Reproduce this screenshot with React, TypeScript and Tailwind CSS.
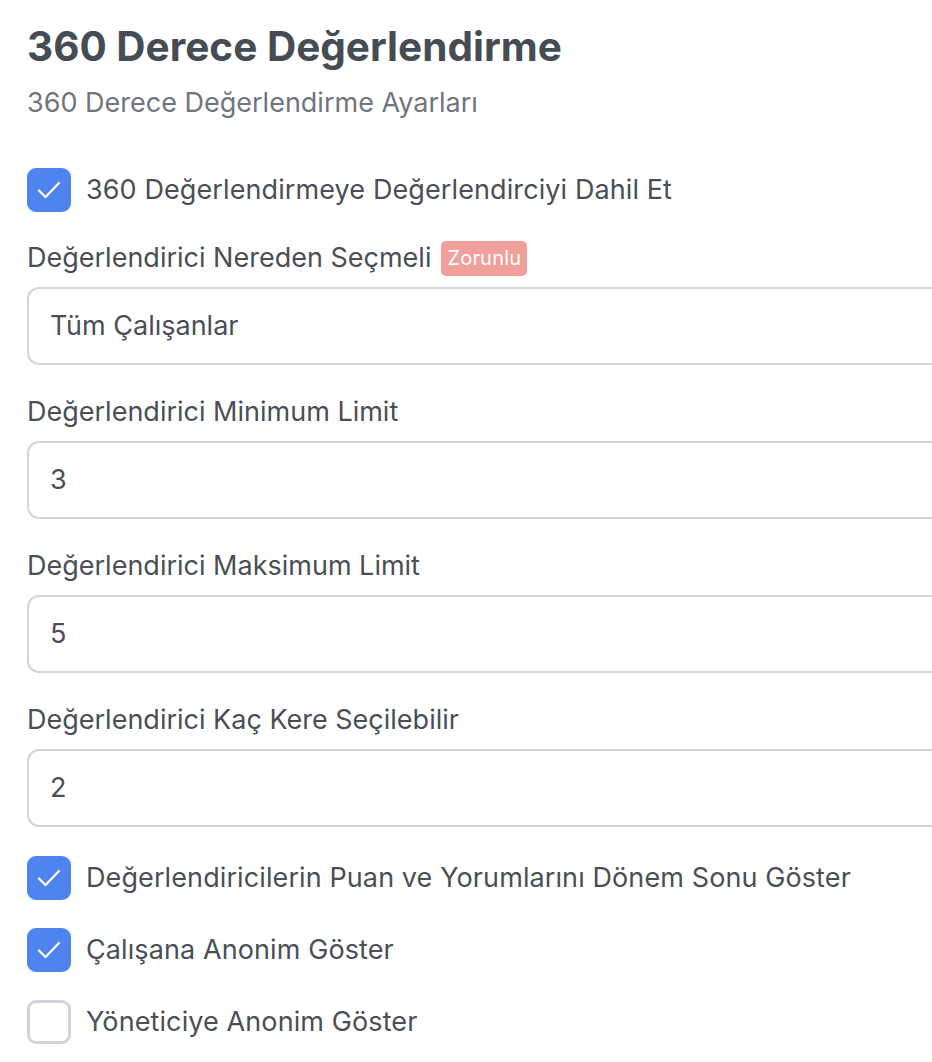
import React from "react";

const font = { fontFamily: "Inter, 'Noto Sans', sans-serif" };

function Check({ checked, label }: { checked: boolean; label: string }) {
  return (
    <div className="flex items-center h-[44px]">
      {checked ? (
        <div className="w-[44px] h-[44px] rounded-[9px] bg-[#4f83ee] flex items-center justify-center shrink-0">
          <svg width="44" height="44" viewBox="0 0 44 44" fill="none">
            <path d="M12 22.5 L18.5 29 L32 15" stroke="white" strokeWidth="2.4" strokeLinecap="round" strokeLinejoin="round" />
          </svg>
        </div>
      ) : (
        <div className="w-[44px] h-[44px] rounded-[9px] border-[3px] border-[#d1d5db] bg-white shrink-0" />
      )}
      <span className="ml-[15px] text-[27px] leading-[36px] text-[#4a4f56] whitespace-nowrap tracking-[0.1px]">{label}</span>
    </div>
  );
}

function Field({ label, value, required }: { label: string; value: string; required?: boolean }) {
  return (
    <div className="flex flex-col">
      <div className="flex items-center h-[36px]">
        <span className="text-[27px] leading-[36px] text-[#4a4f56] whitespace-nowrap">{label}</span>
        {required && (
          <span className="ml-[10px] h-[35px] px-[6px] rounded-[5px] bg-[#f19f9a] text-white text-[20px] leading-[35px] tracking-[0.2px]">
            Zorunlu
          </span>
        )}
      </div>
      <div className="mt-[11px] h-[78px] w-[960px] rounded-[12px] border-2 border-[#d1d5db] bg-white flex items-center px-[21px]">
        <span className="text-[27px] text-[#4a4f56]">{value}</span>
      </div>
    </div>
  );
}

export default function App() {
  return (
    <div style={font} className="w-[932px] h-[1062px] overflow-hidden bg-white pl-[27px] pt-[23px]">
      <h1 className="text-[40.5px] leading-[48px] font-bold text-[#464c53]">360 Derece Değerlendirme</h1>
      <p className="mt-[14px] text-[27px] leading-[36px] text-[#70757c]">360 Derece Değerlendirme Ayarları</p>
      <div className="mt-[47px]">
        <Check checked label="360 Değerlendirmeye Değerlendirciyi Dahil Et" />
      </div>
      <div className="mt-[28px] flex flex-col gap-[29px]">
        <Field label="Değerlendirici Nereden Seçmeli" value="Tüm Çalışanlar" required />
        <Field label="Değerlendirici Minimum Limit" value="3" />
        <Field label="Değerlendirici Maksimum Limit" value="5" />
        <Field label="Değerlendirici Kaç Kere Seçilebilir" value="2" />
      </div>
      <div className="mt-[29px] flex flex-col gap-[28px]">
        <Check checked label="Değerlendiricilerin Puan ve Yorumlarını Dönem Sonu Göster" />
        <Check checked label="Çalışana Anonim Göster" />
        <Check checked={false} label="Yöneticiye Anonim Göster" />
      </div>
    </div>
  );
}
